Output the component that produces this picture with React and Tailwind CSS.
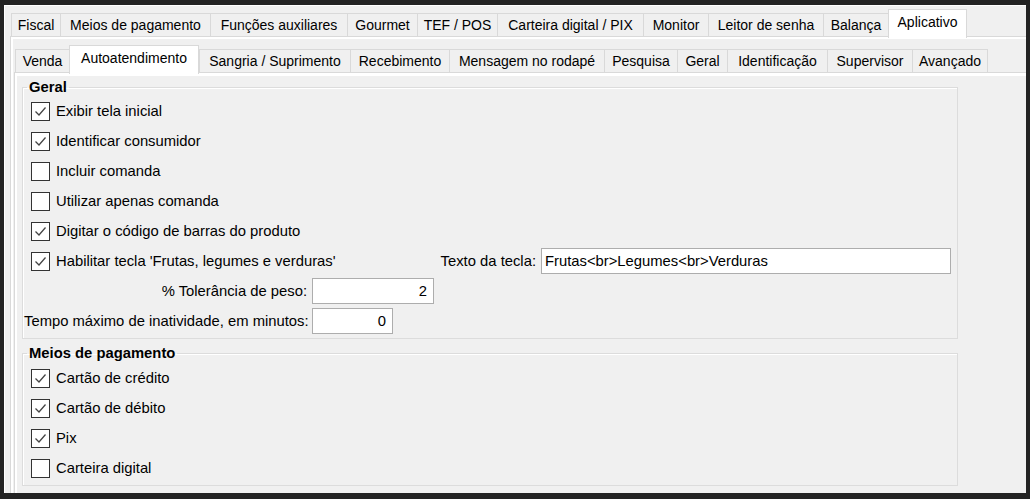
import React from 'react';

const topTabs = [
  { label: 'Fiscal', w: 'w-[49px]' },
  { label: 'Meios de pagamento', w: 'w-[150px]' },
  { label: 'Funções auxiliares', w: 'w-[137px]' },
  { label: 'Gourmet', w: 'w-[70px]' },
  { label: 'TEF / POS', w: 'w-[80px]' },
  { label: 'Carteira digital / PIX', w: 'w-[146px]' },
  { label: 'Monitor', w: 'w-[65px]' },
  { label: 'Leitor de senha', w: 'w-[115px]' },
  { label: 'Balança', w: 'w-[65px]' },
  { label: 'Aplicativo', w: 'w-[79px]', active: true },
];

const subTabs = [
  { label: 'Venda', w: 'w-[54px]' },
  { label: 'Autoatendimento', w: 'w-[130px]', active: true },
  { label: 'Sangria / Suprimento', w: 'w-[151px]' },
  { label: 'Recebimento', w: 'w-[99px]' },
  { label: 'Mensagem no rodapé', w: 'w-[155px]' },
  { label: 'Pesquisa', w: 'w-[73px]' },
  { label: 'Geral', w: 'w-[50px]' },
  { label: 'Identificação', w: 'w-[100px]' },
  { label: 'Supervisor', w: 'w-[85px]' },
  { label: 'Avançado', w: 'w-[76px]' },
];

const Tab = ({ label, w, active }) =>
  active ? (
    <div className={`${w} h-[29px] -mb-[2px] relative z-10 bg-white border border-b-0 border-[#d9d9d9] flex justify-center pt-[2px] leading-[20px] shrink-0 whitespace-nowrap`}>
      {label}
    </div>
  ) : (
    <div className={`${w} h-[23px] bg-[#f0f0f0] border-t border-l border-[#d9d9d9] last:border-r flex items-center justify-center shrink-0 whitespace-nowrap`}>
      {label}
    </div>
  );

const Check = ({ checked, label }) => (
  <div className="flex items-center gap-[6px]">
    <div className="w-[19px] h-[19px] border border-[#333] bg-white shrink-0">
      {checked && (
        <svg viewBox="0 0 17 17" className="w-[17px] h-[17px]">
          <polyline points="3.5,8.5 7,12 13.5,4.5" fill="none" stroke="#444" strokeWidth="1.3" />
        </svg>
      )}
    </div>
    <span className="whitespace-nowrap">{label}</span>
  </div>
);

const Row = ({ children }) => <div className="flex items-center h-[30px] pl-[8px]">{children}</div>;

const Field = ({ value, w, right }) => (
  <div className={`${w} h-[26px] bg-white border border-[#adadad] flex items-center whitespace-nowrap ${right ? 'justify-end pr-[6px]' : 'pl-[3px]'}`}>
    {value}
  </div>
);

export default function App() {
  return (
    <div className="w-[1030px] h-[499px] bg-[#232323] pt-[5px] pl-[4px] overflow-hidden font-['Liberation_Sans',Arial,sans-serif] text-[14px] text-black">
      <div className="w-[1022px] h-[488px] bg-[#f0f0f0] border-t border-l border-white pl-[5px] pt-[3px] overflow-hidden">
        {/* Top tabs */}
        <div className="flex items-end h-[27px] pl-[1px]">
          {topTabs.map((t) => (
            <Tab key={t.label} {...t} />
          ))}
        </div>

        {/* Page */}
        <div className="border-t border-l border-[#d9d9d9] bg-white pt-[2px] pl-[2px] h-[460px]">
          <div className="bg-[#f0f0f0] h-full pt-[5px] pl-[1px]">
            {/* Sub tabs */}
            <div className="flex items-end h-[28px] pl-[1px]">
              {subTabs.map((t) => (
                <Tab key={t.label} {...t} />
              ))}
            </div>

            <div className="border-t border-l border-[#d9d9d9] bg-white pt-[3px] pl-[2px] h-[430px]">
              <div className="bg-[#f0f0f0] h-full pl-[5px] pt-[3px] text-[14.8px]">
                <fieldset className="w-[936px] border border-[#dcdcdc] shadow-[inset_1px_1px_0_#fff] pt-[1px] pb-[2px]">
                  <legend className="ml-[4px] px-[2px] font-bold leading-[16px]">Geral</legend>
                  <Row><Check checked label="Exibir tela inicial" /></Row>
                  <Row><Check checked label="Identificar consumidor" /></Row>
                  <Row><Check label="Incluir comanda" /></Row>
                  <Row><Check label="Utilizar apenas comanda" /></Row>
                  <Row><Check checked label="Digitar o código de barras do produto" /></Row>
                  <Row>
                    <div className="w-[400px]">
                      <Check checked label="Habilitar tecla 'Frutas, legumes e verduras'" />
                    </div>
                    <span className="w-[105px] text-right whitespace-nowrap">Texto da tecla:</span>
                    <div className="ml-[5px]">
                      <Field w="w-[410px]" value="Frutas<br>Legumes<br>Verduras" />
                    </div>
                  </Row>
                  <div className="flex items-center h-[30px] pl-[1px]">
                    <span className="w-[283px] text-right whitespace-nowrap">% Tolerância de peso:</span>
                    <div className="ml-[5px]">
                      <Field w="w-[122px]" value="2" right />
                    </div>
                  </div>
                  <div className="flex items-center h-[30px] pl-[1px]">
                    <span className="w-[283px] text-right whitespace-nowrap">Tempo máximo de inatividade, em minutos:</span>
                    <div className="ml-[5px]">
                      <Field w="w-[81px]" value="0" right />
                    </div>
                  </div>
                </fieldset>

                <fieldset className="w-[936px] mt-[6px] border border-[#dcdcdc] shadow-[inset_1px_1px_0_#fff] pt-[2px] pb-[2px]">
                  <legend className="ml-[4px] px-[2px] font-bold leading-[16px]">Meios de pagamento</legend>
                  <Row><Check checked label="Cartão de crédito" /></Row>
                  <Row><Check checked label="Cartão de débito" /></Row>
                  <Row><Check checked label="Pix" /></Row>
                  <Row><Check label="Carteira digital" /></Row>
                </fieldset>
              </div>
            </div>
          </div>
        </div>
      </div>
    </div>
  );
}
